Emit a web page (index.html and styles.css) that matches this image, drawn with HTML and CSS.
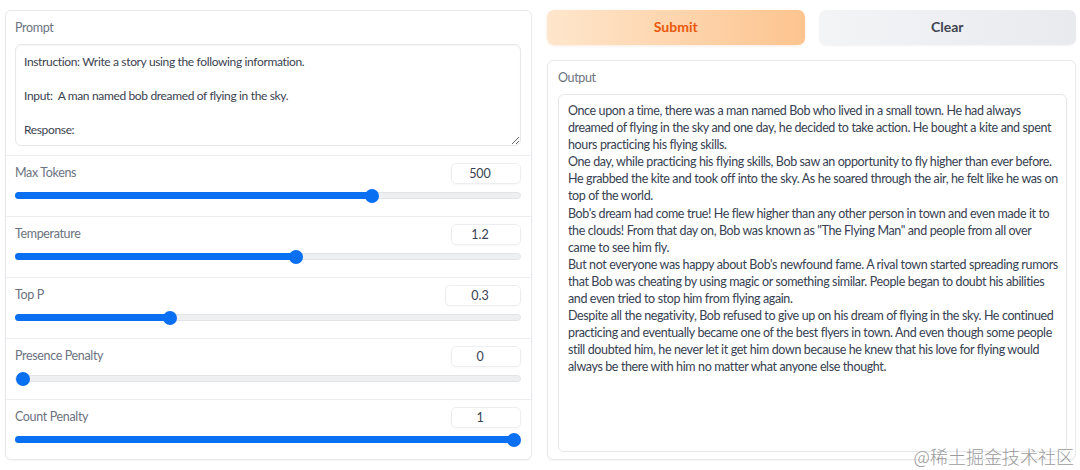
FILE: index.html
```html
<!DOCTYPE html>
<html>
<head>
<meta charset="utf-8">
<link rel="stylesheet" href="styles.css">
</head>
<body>
<div class="app">
  <div class="left">
    <div class="panel">
      <div class="block prompt">
        <div class="label">Prompt</div>
        <textarea class="textarea">Instruction: Write a story using the following information.

Input:  A man named bob dreamed of flying in the sky.

Response:</textarea>
      </div>
      <div class="block slider">
        <div class="head"><span class="label">Max Tokens</span><span class="num">500</span></div>
        <div class="track"><div class="fill" style="width:70.6%"></div><div class="thumb" style="left:70.6%"></div></div>
      </div>
      <div class="block slider">
        <div class="head"><span class="label">Temperature</span><span class="num">1.2</span></div>
        <div class="track"><div class="fill" style="width:55.5%"></div><div class="thumb" style="left:55.5%"></div></div>
      </div>
      <div class="block slider">
        <div class="head"><span class="label">Top P</span><span class="num wide">0.3</span></div>
        <div class="track"><div class="fill" style="width:30.6%"></div><div class="thumb" style="left:30.6%"></div></div>
      </div>
      <div class="block slider">
        <div class="head"><span class="label">Presence Penalty</span><span class="num">0</span></div>
        <div class="track"><div class="fill" style="width:0%"></div><div class="thumb" style="left:0%"></div></div>
      </div>
      <div class="block slider">
        <div class="head"><span class="label">Count Penalty</span><span class="num">1</span></div>
        <div class="track"><div class="fill" style="width:100%"></div><div class="thumb" style="left:100%"></div></div>
      </div>
    </div>
  </div>
  <div class="right">
    <div class="buttons">
      <button class="btn primary">Submit</button>
      <button class="btn secondary">Clear</button>
    </div>
    <div class="panel output">
      <div class="label">Output</div>
      <div class="outbox">Once upon a time, there was a man named Bob who lived in a small town. He had always
dreamed of flying in the sky and one day, he decided to take action. He bought a kite and spent
hours practicing his flying skills.
One day, while practicing his flying skills, Bob saw an opportunity to fly higher than ever before.
He grabbed the kite and took off into the sky. As he soared through the air, he felt like he was on
top of the world.
Bob's dream had come true! He flew higher than any other person in town and even made it to
the clouds! From that day on, Bob was known as "The Flying Man" and people from all over
came to see him fly.
But not everyone was happy about Bob's newfound fame. A rival town started spreading rumors
that Bob was cheating by using magic or something similar. People began to doubt his abilities
and even tried to stop him from flying again.
Despite all the negativity, Bob refused to give up on his dream of flying in the sky. He continued
practicing and eventually became one of the best flyers in town. And even though some people
still doubted him, he never let it get him down because he knew that his love for flying would
always be there with him no matter what anyone else thought.</div>
    </div>
  </div>
</div>
<div class="watermark">@稀土掘金技术社区</div>
</body>
</html>
```
FILE: styles.css
```css
* { box-sizing: border-box; }
html, body { margin: 0; padding: 0; background: #fff; }
body {
  width: 1080px; height: 470px; overflow: hidden; position: relative;
  font-family: Lato, "Noto Sans", sans-serif; color: #374151;
}
.app {
  display: flex; gap: 15px;
  padding: 10px 4px 0 5px;
}
.left { width: 527px; }
.right { width: 529px; display: flex; flex-direction: column; gap: 15px; }
.panel {
  border: 1px solid #e8e9ec; border-radius: 6px; background: #fff;
  box-shadow: 0 1px 2px rgba(0,0,0,0.04);
}
.left .panel { height: 450px; overflow: hidden; }
.block { border-top: 1px solid #eceef1; padding: 0 10px 0 9px; }
.block:first-child { border-top: none; }
.label { font-size: 12.5px; color: #6b7280; line-height: 16px; letter-spacing: -0.35px; }
.prompt { height: 144px; padding-top: 9px; }
.prompt .label { margin-bottom: 8px; }
.textarea {
  display: block; width: 100%; height: 102px; resize: vertical;
  border: 1px solid #e5e7eb; border-radius: 6px; padding: 8px 8px;
  font-family: inherit; font-size: 12px; letter-spacing: -0.35px; line-height: 17px; color: #3b4250;
  box-shadow: 0 1px 2px rgba(0,0,0,0.04) inset; outline: none;
}
.slider { height: 61px; padding-top: 7px; }
.head { display: flex; justify-content: space-between; align-items: center; height: 21px; }
.head .label { align-self: flex-start; margin-top: 2px; }
.num {
  width: 70px; height: 21px; border: 1px solid #eceef1; border-radius: 5px;
  font-size: 12.5px; text-align: center; line-height: 19px; color: #374151;
  padding-right: 12px;
  box-shadow: 0 1px 2px rgba(0,0,0,0.03);
}
.num.wide { width: 76px; padding-right: 6px; }
.track {
  position: relative; margin: 8px 0 0 0; height: 7px; border-radius: 4px;
  background: #eeeff1; border: 1px solid #e2e4e8;
}
.fill { position: absolute; left: -1px; top: -1px; bottom: -1px; background: #0b6ff2; border-radius: 4px; }
.thumb {
  position: absolute; top: 50%; width: 14px; height: 14px; margin: -7px 0 0 -7px;
  border-radius: 50%; background: #0b6ff2;
}
.slider:nth-child(5) .thumb { margin-left: 0; }
.slider:nth-child(6) .thumb { margin-left: -13px; }
.buttons { display: flex; gap: 14px; height: 35px; }
.btn {
  flex: 1; border: none; border-radius: 7px; font-family: inherit;
  font-size: 14px; font-weight: 700; padding: 0 0 3px;
}
.primary {
  background: linear-gradient(to right, #fee6cc, #fdc48f); color: #ea580c;
  box-shadow: 0 1px 3px rgba(234,88,12,0.12);
}
.secondary {
  background: linear-gradient(to right, #f3f4f6, #e8eaee); color: #3f4451;
  box-shadow: 0 1px 2px rgba(0,0,0,0.05);
}
.output { height: 400px; padding: 9px 8px 7px 10px; display: flex; flex-direction: column; }
.output .label { margin-bottom: 8px; margin-top: 0; }
.outbox {
  flex: 1; border: 1px solid #e5e7eb; border-radius: 6px; padding: 7px 4px 6px 9px;
  font-size: 12.5px; letter-spacing: -0.38px; line-height: 17.1px; white-space: pre; color: #374151;
  overflow: hidden;
}
.watermark {
  position: absolute; right: 6px; bottom: 3px;
  font-family: "Noto Sans CJK SC", sans-serif; font-size: 18px; font-weight: 300;
  color: rgba(128,128,128,0.8); line-height: 22px;
}
```
